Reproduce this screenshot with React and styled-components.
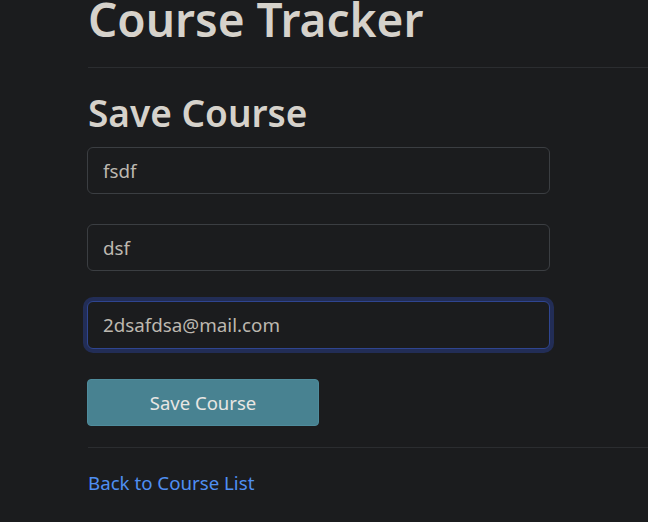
import React, { useState } from 'react'
import styled, { createGlobalStyle } from 'styled-components'

const GlobalStyle = createGlobalStyle`
  html, body {
    margin: 0;
    padding: 0;
    background: #1b1c1e;
    overflow: hidden;
  }
  body {
    font-family: "Noto Sans", "Open Sans", sans-serif;
    color: #d4d0c9;
  }
`

const Page = styled.div`
  min-height: 522px;
  padding-left: 87px;
  overflow: hidden;
`

const Title = styled.h1`
  margin: -9px 0 0 1px;
  font-size: 46px;
  font-weight: 600;
  line-height: 57px;
  color: #d6d2cb;
  white-space: nowrap;
`

const Rule = styled.hr`
  margin: ${p => p.$top || 0}px -200px 0 1px;
  border: 0;
  border-top: 1px solid #2b2d30;
  height: 0;
`

const Heading = styled.h2`
  margin: 21px 0 0 1px;
  font-size: 37px;
  font-weight: 600;
  line-height: 48px;
  color: #d6d2cb;
`

const Form = styled.form`
  display: flex;
  flex-direction: column;
  align-items: flex-start;
  width: 463px;
  margin-top: 10px;
`

const Field = styled.input`
  box-sizing: border-box;
  width: 463px;
  height: ${p => (p.$focus ? 48 : 47)}px;
  margin-bottom: 30px;
  padding: 0 15px;
  font-family: inherit;
  font-size: 18.8px;
  color: #bdb8b0;
  background: #1b1c1e;
  border: 1px solid ${p => (p.$focus ? '#2f4590' : '#3b3e42')};
  border-radius: 6px;
  outline: none;
  box-shadow: ${p => (p.$focus ? '0 0 0 4px #222d56' : 'none')};
`

const SaveButton = styled.button`
  box-sizing: border-box;
  width: 232px;
  height: 47px;
  font-family: inherit;
  font-size: 18.5px;
  color: #e8e6e3;
  background: #488291;
  border: 1px solid #4f8c9c;
  border-radius: 4px;
  cursor: pointer;
`

const BackLink = styled.a`
  display: inline-block;
  margin: 22px 0 0 1px;
  font-size: 18.7px;
  color: #4f8ff2;
  text-decoration: none;
`

export default function App() {
  const [values, setValues] = useState({
    name: 'fsdf',
    teacher: 'dsf',
    email: '2dsafdsa@mail.com',
  })

  const change = key => e => setValues({ ...values, [key]: e.target.value })

  return (
    <>
      <GlobalStyle />
      <Page>
        <Title>Course Tracker</Title>
        <Rule $top={19} />
        <Heading>Save Course</Heading>
        <Form onSubmit={e => e.preventDefault()}>
          <Field value={values.name} onChange={change('name')} />
          <Field value={values.teacher} onChange={change('teacher')} />
          <Field $focus value={values.email} onChange={change('email')} />
          <SaveButton type="submit">Save Course</SaveButton>
        </Form>
        <Rule $top={21} />
        <BackLink href="#">Back to Course List</BackLink>
      </Page>
    </>
  )
}
